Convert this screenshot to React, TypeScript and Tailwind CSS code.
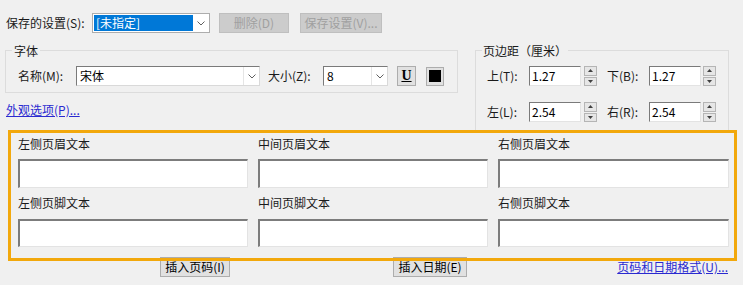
import React from "react";

const font = "font-['Noto_Sans_CJK_SC','Microsoft_YaHei',sans-serif]";

function Chevron() {
  return (
    <svg width="8" height="5" viewBox="0 0 8 5" className="shrink-0">
      <path d="M0.5 0.5 L4 4 L7.5 0.5" fill="none" stroke="#606060" strokeWidth="1" />
    </svg>
  );
}

function Combo({ width, value }: { width: string; value: string }) {
  return (
    <div className={`${width} h-[20px] flex items-center bg-white border border-t-[#7a7a7a] border-l-[#7a7a7a] border-r-[#d9d9d9] border-b-[#d9d9d9]`}>
      <span className="flex-1 pl-[3px] leading-[18px] text-black">{value}</span>
      <div className="w-[16px] h-full flex items-center justify-center border-l border-[#e5e5e5]">
        <Chevron />
      </div>
    </div>
  );
}

function Spinner() {
  return (
    <div className="w-[13px] h-[20px] flex flex-col gap-[1px]">
      {[0, 1].map((i) => (
        <div key={i} className="flex-1 flex items-center justify-center bg-[#e6e6e6] border border-[#b5b5b5]">
          <svg width="5" height="3" viewBox="0 0 5 3">
            {i === 0 ? <path d="M0 3 L2.5 0 L5 3 Z" fill="#404040" /> : <path d="M0 0 L2.5 3 L5 0 Z" fill="#404040" />}
          </svg>
        </div>
      ))}
    </div>
  );
}

function NumField({ value }: { value: string }) {
  return (
    <div className="w-[52px] h-[20px] bg-white border border-t-[#7a7a7a] border-l-[#7a7a7a] border-r-[#e3e3e3] border-b-[#e3e3e3] pl-[2px] leading-[18px] text-black">
      {value}
    </div>
  );
}

function TextBox({ h }: { h: string }) {
  return <div className={`${h} bg-white border-t-2 border-l-2 border-r border-b border-t-[#7c7c7c] border-l-[#7c7c7c] border-r-[#e3e3e3] border-b-[#e3e3e3]`} />;
}

const fields = [
  ["左侧页眉文本", "中间页眉文本", "右侧页眉文本"],
  ["左侧页脚文本", "中间页脚文本", "右侧页脚文本"],
];

export default function App() {
  return (
    <div className={`${font} relative w-[743px] h-[285px] overflow-hidden bg-[#f0f0f0] text-[12px] text-[#1a1a1a]`}>
      {/* saved settings row */}
      <div className="flex items-center pt-[13px]">
        <span className="w-[92px] pl-[6px] leading-[20px]">保存的设置(S):</span>
        <div className="w-[118px] h-[20px] flex items-center bg-white border border-[#adadad] p-[1px]">
          <span className="flex-1 h-full bg-[#0078d7] text-white pl-[2px] leading-[16px]">[未指定]</span>
          <div className="w-[15px] flex items-center justify-center">
            <Chevron />
          </div>
        </div>
        <button className="ml-[9px] w-[70px] h-[20px] bg-[#cccccc] border border-[#bfbfbf] text-[#a0a0a0] leading-[18px]">删除(D)</button>
        <button className="ml-[11px] w-[82px] h-[20px] bg-[#cccccc] border border-[#bfbfbf] text-[#a0a0a0] leading-[18px]">保存设置(V)...</button>
      </div>

      {/* groups */}
      <div className="flex mt-[17px]">
        <div className="ml-[5px] w-[453px]">
          <div className="border border-[#dcdcdc] pb-[6px]">
            <span className="block w-fit -mt-[8px] ml-[6px] px-[2px] bg-[#f0f0f0] leading-[16px]">字体</span>
            <div className="flex items-center mt-[7px] pl-[12px]">
              <span className="w-[58px]">名称(M):</span>
              <Combo width="w-[184px]" value="宋体" />
              <span className="ml-[8px] w-[55px]">大小(Z):</span>
              <Combo width="w-[65px]" value="8" />
              <button className="ml-[9px] w-[19px] h-[20px] flex items-center justify-center bg-[#e1e1e1] border border-[#adadad]">
                <span className="font-['Liberation_Serif',serif] font-bold text-[14px] leading-[14px] underline text-black">U</span>
              </button>
              <button className="ml-[10px] w-[18px] h-[19px] flex items-center justify-center bg-[#e1e1e1] border border-[#adadad]">
                <span className="w-[12px] h-[12px] bg-black" />
              </button>
            </div>
          </div>
          <a className="block mt-[9px] ml-[1px] leading-[16px] text-[#2a2ad0] underline">外观选项(P)...</a>
        </div>

        <div className="ml-[17px] w-[254px] h-[83px] -mb-[2px] border border-[#dcdcdc]">
          <span className="block w-fit -mt-[8px] ml-[6px] px-[1px] bg-[#f0f0f0] leading-[16px]">页边距（厘米）</span>
          {[
            ["上(T):", "1.27", "下(B):", "1.27"],
            ["左(L):", "2.54", "右(R):", "2.54"],
          ].map((r, i) => (
            <div key={i} className={`flex items-center pl-[11px] ${i === 0 ? "mt-[7px]" : "mt-[16px]"}`}>
              <span className="w-[42px]">{r[0]}</span>
              <NumField value={r[1]} />
              <div className="ml-[3px]"><Spinner /></div>
              <span className="ml-[10px] w-[42px]">{r[2]}</span>
              <NumField value={r[3]} />
              <div className="ml-[2px]"><Spinner /></div>
            </div>
          ))}
        </div>
      </div>

      {/* header / footer text */}
      <div className="mt-[5px] pl-[18px] grid grid-cols-[230px_230px_231px] gap-x-[10px]">
        {fields.map((row, ri) =>
          row.map((label) => (
            <div key={label} className={ri === 1 ? "mt-[7px]" : ""}>
              <div className="leading-[16px]">{label}</div>
              <div className={ri === 0 ? "mt-[7px]" : "mt-[8px]"}>
                <TextBox h={ri === 0 ? "h-[29px]" : "h-[28px]"} />
              </div>
            </div>
          ))
        )}
      </div>

      {/* bottom buttons */}
      <div className="flex items-center mt-[10px]">
        <button className="ml-[160px] w-[70px] h-[20px] bg-[#e1e1e1] border border-[#adadad] leading-[18px] text-black">插入页码(I)</button>
        <button className="ml-[163px] w-[74px] h-[20px] bg-[#e1e1e1] border border-[#adadad] leading-[18px] text-black">插入日期(E)</button>
        <a className="ml-auto mr-[15px] leading-[16px] text-[#2a2ad0] underline">页码和日期格式(U)...</a>
      </div>

      {/* highlight annotation */}
      <div className="pointer-events-none absolute left-[8px] top-[130px] w-[729px] h-[131px] border-[3px] border-[#f2a80c]" />
    </div>
  );
}
